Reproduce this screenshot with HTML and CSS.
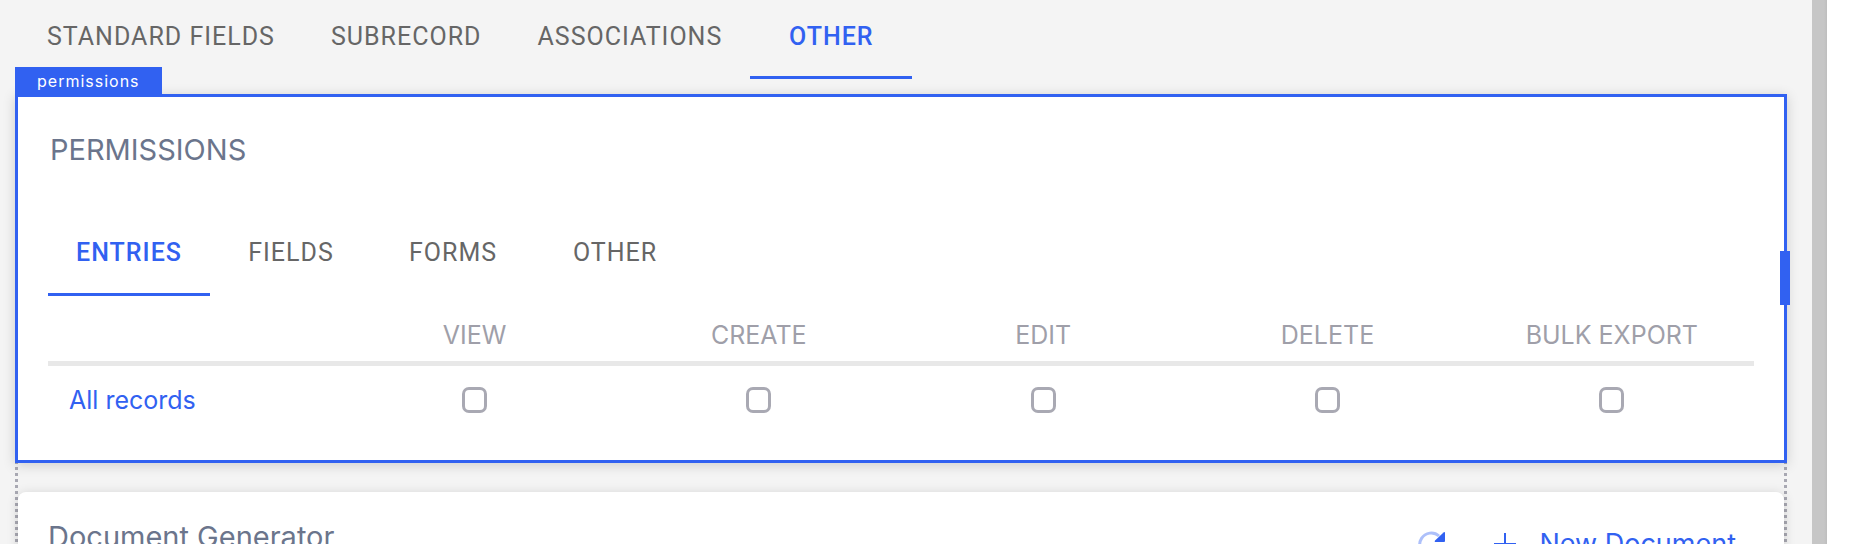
FILE: index.html
```
<!DOCTYPE html>
<html lang="en">
<head>
  <meta charset="UTF-8">
  <title>Permissions</title>
  <link rel="stylesheet" href="styles.css">
</head>
<body>
  <main class="canvas">
    <nav class="tabs page-tabs">
      <button type="button" class="tab">STANDARD FIELDS</button>
      <button type="button" class="tab">SUBRECORD</button>
      <button type="button" class="tab">ASSOCIATIONS</button>
      <button type="button" class="tab active">OTHER</button>
    </nav>

    <section class="widget selected">
      <span class="widget-label">permissions</span>
      <h2 class="widget-title">PERMISSIONS</h2>

      <nav class="tabs">
        <button type="button" class="tab active">ENTRIES</button>
        <button type="button" class="tab">FIELDS</button>
        <button type="button" class="tab">FORMS</button>
        <button type="button" class="tab">OTHER</button>
      </nav>

      <table class="permissions">
        <thead>
          <tr>
            <td></td>
            <th>VIEW</th>
            <th>CREATE</th>
            <th>EDIT</th>
            <th>DELETE</th>
            <th>BULK EXPORT</th>
          </tr>
        </thead>
        <tbody>
          <tr>
            <td class="record"><a href="#">All records</a></td>
            <td><input type="checkbox" aria-label="View"></td>
            <td><input type="checkbox" aria-label="Create"></td>
            <td><input type="checkbox" aria-label="Edit"></td>
            <td><input type="checkbox" aria-label="Delete"></td>
            <td><input type="checkbox" aria-label="Bulk export"></td>
          </tr>
        </tbody>
      </table>
      <span class="resize-handle"></span>
    </section>

    <div class="slot">
      <section class="widget documents">
        <h2 class="widget-title">Document Generator</h2>
        <div class="actions">
          <button type="button" class="icon-button" aria-label="Refresh">
            <svg width="28" height="28" viewBox="0 0 28 28">
              <path d="M21 6A11.500 11.500 0 1 0 24.500 17" fill="none" stroke="#adc0fa" stroke-width="3"/>
              <path d="M25.500 2.500Q27 1.500 27 3v8q0 1-1 1h-8q-2 0-1-1.500z" fill="#3161f1"/>
            </svg>
          </button>
          <button type="button" class="new-button">
            <svg width="24" height="24" viewBox="0 0 24 24">
              <path d="M12 1v22M1 12h22" fill="none" stroke="#3161f1" stroke-width="2"/>
            </svg>
            New Document
          </button>
        </div>
      </section>
    </div>
  </main>
  <div class="scrollbar"></div>
  <aside class="side"></aside>
</body>
</html>
```

FILE: styles.css
```
* { box-sizing: border-box; }
body {
  margin: 0; height: 100vh; overflow: hidden;
  display: flex; background: #f4f4f4;
  font-family: Inter, "Liberation Sans", sans-serif; font-size: 25px;
}
button { border: 0; padding: 0; background: none; font: inherit; color: inherit; cursor: pointer; }
.canvas { flex: 1; padding: 0 25px 0 15px; overflow: hidden; }
.scrollbar { width: 15px; background: linear-gradient(to right, #c6c6c6 80%, #bebebe); }
.side { width: 23px; background: #fff; }

/* tabs */
.tabs { display: flex; }
.tab {
  min-width: 162px; height: 88px; padding: 4px 28px 0;
  border-bottom: 3px solid transparent;
  font-family: Roboto, sans-serif; font-size: 25px; letter-spacing: 1px;
  color: #666;
}
.tab.active { color: #3161f1; border-color: #3161f1; font-weight: 500; }
.page-tabs { padding-left: 4px; height: 94px; }
.page-tabs .tab { height: 79px; padding: 0 28px 4px; }

/* widgets */
.widget {
  background: #fff; padding: 0 30px;
  box-shadow: 0 2px 12px rgba(0,0,0,0.16);
}
.widget-title { margin: 0; font-size: 29px; font-weight: 400; line-height: 36px; color: #6b758c; }
.selected { position: relative; border: 3px solid #3161f1; padding-top: 35px; padding-bottom: 29px; }
.selected .widget-title { padding-left: 2px; margin-bottom: 40px; }
.widget-label {
  position: absolute; left: -3px; top: -30px;
  padding: 1px 22px 0; line-height: 27px;
  background: #3161f1; color: #fff;
  font-size: 16px; letter-spacing: 1px;
}
.resize-handle {
  position: absolute; right: -6px; top: 154px;
  width: 10px; height: 54px; background: #3161f1;
}

.permissions { width: 100%; table-layout: fixed; border-collapse: collapse; text-align: center; }
.permissions thead { border-bottom: 5px solid #e8e8e8; }
.permissions th { padding: 14px 0 0; height: 67px; font-weight: 400; color: #9f9fa9; }
.permissions tbody td { padding: 4px 0 0; height: 68px; }
.permissions tbody .record { padding-left: 21px; text-align: left; }
.record a { color: #3161f1; text-decoration: none; }
.permissions input {
  appearance: none; display: block; margin: 0 auto;
  width: 25px; height: 26px;
  border: 3px solid #a9a9b3; border-radius: 7px; background: #fff;
}

/* drop area with dotted sides */
.slot {
  height: 200px; padding: 29px 3px 0;
  background:
    linear-gradient(to bottom, #a9a9b3 50%, transparent 50%) left 4px / 3px 6px repeat-y,
    linear-gradient(to bottom, #a9a9b3 50%, transparent 50%) right 4px / 3px 6px repeat-y;
}
.documents {
  display: flex; justify-content: space-between; align-items: flex-start;
  height: 160px; padding-top: 27px; border-radius: 8px;
}
.actions { display: flex; align-items: center; gap: 47px; padding: 9px 18px 0 0; color: #3161f1; }
.icon-button { height: 28px; }
.icon-button svg, .new-button svg { display: block; }
.new-button { display: flex; align-items: center; gap: 22px; font-size: 27px; line-height: 32px; }
```
